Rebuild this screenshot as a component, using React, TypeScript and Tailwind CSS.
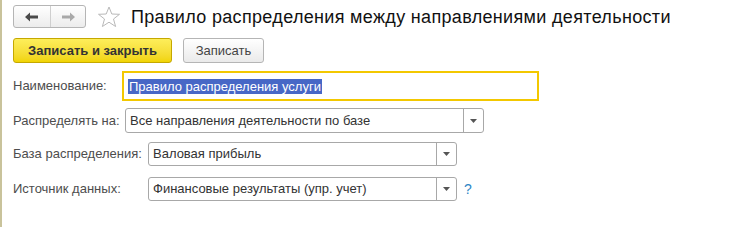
import React from 'react';

const font = { fontFamily: '"Liberation Sans", Arial, sans-serif' };

const ArrowLeft = ({ color }: { color: string }) => (
  <svg width="14" height="10" viewBox="0 0 14 10">
    <path d="M0 5 L5 0.5 L5 3.5 L13 3.5 L13 6.5 L5 6.5 L5 9.5 Z" fill={color} />
  </svg>
);

const ArrowRight = ({ color }: { color: string }) => (
  <svg width="14" height="10" viewBox="0 0 14 10">
    <path d="M14 5 L9 0.5 L9 3.5 L1 3.5 L1 6.5 L9 6.5 L9 9.5 Z" fill={color} />
  </svg>
);

const Star = () => (
  <svg width="24" height="22" viewBox="0 0 24 22">
    <path
      d="M12 1 L14.8 8 L22.5 8.3 L16.5 13 L18.6 20.5 L12 16.2 L5.4 20.5 L7.5 13 L1.5 8.3 L9.2 8 Z"
      fill="none"
      stroke="#b9b9b9"
      strokeWidth="1"
      strokeLinejoin="round"
    />
  </svg>
);

const Caret = () => (
  <svg width="7" height="4" viewBox="0 0 7 4">
    <path d="M0 0 L7 0 L3.5 4 Z" fill="#555" />
  </svg>
);

interface SelectProps {
  value: string;
  width: string;
}

const SelectField: React.FC<SelectProps> = ({ value, width }) => (
  <div className={`flex h-full ${width} border border-[#a8a8a8] rounded-[3px] bg-white`}>
    <div className="flex-1 flex items-center pl-[4px] text-[13px] text-[#333] whitespace-nowrap overflow-hidden">
      {value}
    </div>
    <div className="w-[20px] border-l border-[#a8a8a8] flex items-center justify-center">
      <Caret />
    </div>
  </div>
);

export default function App() {
  return (
    <div className="w-[738px] h-[227px] bg-white border-l-2 border-[#c9c39b] overflow-hidden" style={font}>
      <div className="pl-[11px] pt-[5px]">
        {/* Header */}
        <div className="flex items-center h-[23px]">
          <div className="flex h-[23px] w-[73px] border border-[#b5b5b5] rounded-[3px] bg-gradient-to-b from-white to-[#ececec]">
            <div className="w-[37px] flex items-center justify-center border-r border-[#cfcfcf]">
              <ArrowLeft color="#4a4a4a" />
            </div>
            <div className="flex-1 flex items-center justify-center">
              <ArrowRight color="#a9a9a9" />
            </div>
          </div>
          <div className="ml-[11px] flex items-center">
            <Star />
          </div>
          <div className="ml-[10px] text-[18px] tracking-[0.33px] text-[#111] whitespace-nowrap leading-none">
            Правило распределения между направлениями деятельности
          </div>
        </div>

        {/* Command bar */}
        <div className="flex mt-[10px] h-[25px] gap-[11px]">
          <button className="w-[159px] h-full rounded-[3px] border border-[#c5a800] bg-gradient-to-b from-[#fdee5a] to-[#f1d400] text-[13px] font-bold text-[#333]">
            Записать и закрыть
          </button>
          <button className="w-[81px] h-full rounded-[3px] border border-[#b5b5b5] bg-gradient-to-b from-white to-[#eaeaea] text-[13px] text-[#444]">
            Записать
          </button>
        </div>

        {/* Form */}
        <div className="flex items-center mt-[8px] h-[30px]">
          <div className="w-[109px] text-[13px] text-[#4d4d4d]">Наименование:</div>
          <div className="w-[417px] h-full border-2 border-[#f3c800] flex items-center pl-[4px]">
            <span className="bg-[#4767c6] text-white text-[13px] leading-[15px] px-[1px]">
              Правило распределения услуги
            </span>
          </div>
        </div>

        <div className="flex items-center mt-[7px] h-[25px]">
          <div className="w-[112px] text-[13px] text-[#4d4d4d] whitespace-nowrap">Распределять на:</div>
          <SelectField value="Все направления деятельности по базе" width="w-[359px]" />
        </div>

        <div className="flex items-center mt-[9px] h-[24px]">
          <div className="w-[135px] text-[13px] text-[#4d4d4d] whitespace-nowrap">База распределения:</div>
          <SelectField value="Валовая прибыль" width="w-[309px]" />
        </div>

        <div className="flex items-center mt-[11px] h-[24px]">
          <div className="w-[135px] text-[13px] text-[#4d4d4d] whitespace-nowrap">Источник данных:</div>
          <SelectField value="Финансовые результаты (упр. учет)" width="w-[309px]" />
          <div className="ml-[7px] text-[14px] text-[#2f86c6]">?</div>
        </div>
      </div>
    </div>
  );
}
